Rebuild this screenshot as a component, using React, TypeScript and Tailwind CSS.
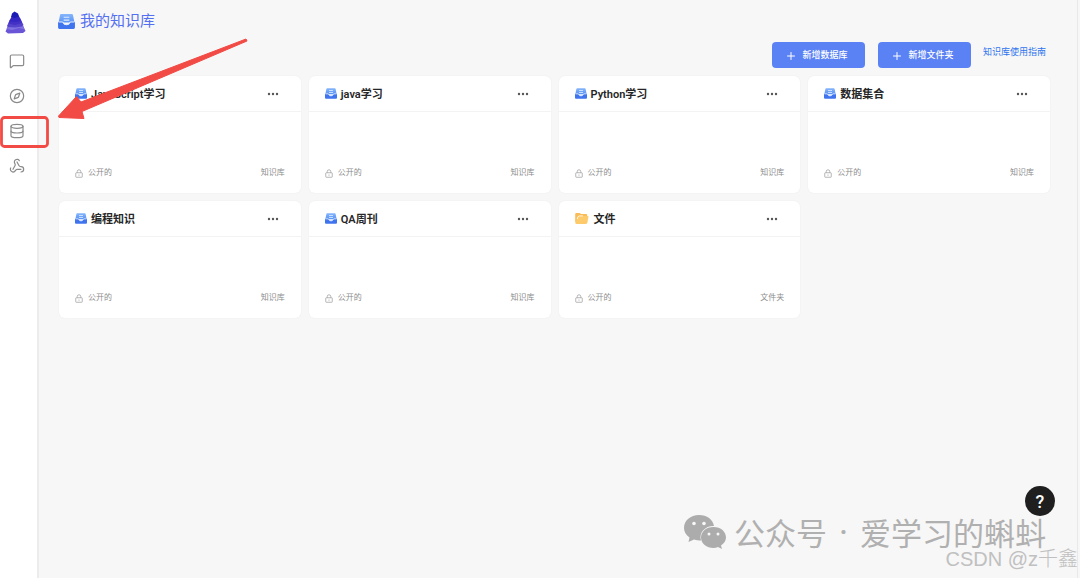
import { Compass, Database, MessageSquare, Plus, Webhook } from 'lucide-react';

type CardKind = 'dataset' | 'folder';

interface KnowledgeItem {
  name: string;
  kind: CardKind;
}

const items: KnowledgeItem[] = [
  { name: 'JavaScript学习', kind: 'dataset' },
  { name: 'java学习', kind: 'dataset' },
  { name: 'Python学习', kind: 'dataset' },
  { name: '数据集合', kind: 'dataset' },
  { name: '编程知识', kind: 'dataset' },
  { name: 'QA周刊', kind: 'dataset' },
  { name: '文件', kind: 'folder' },
];

const navItems = [
  { label: '对话', icon: MessageSquare },
  { label: '发现', icon: Compass },
  { label: '知识库', icon: Database },
  { label: '插件', icon: Webhook },
];

const Logo = () => (
  <svg viewBox="0 0 42 46" className="w-[21px] h-[23px]" aria-hidden="true">
    <path d="M6 30 L36 29 L41 40 L36 44 L6 45 L1 41 Z" fill="#6a55d6" />
    <path d="M5 31 L36 30 L39 37 L28 34 L14 38 L3 36 Z" fill="#8173e0" />
    <path d="M9 19 L32 18 L37 28 L34 31 L20 33 L6 32 L4 30 Z" fill="#5543cc" />
    <path d="M9 19 L32 18 L34 24 L20 28 L7 25 Z" fill="#4331c6" />
    <path d="M14 10 L27 9 L32 17 L30 20 L20 22 L10 21 L9 19 Z" fill="#3527c4" />
    <path d="M14 5 L19 1 L26 5 L28 11 L19 14 L12 12 Z" fill="#1b1bb5" />
  </svg>
);

const DatasetIcon = ({ className }: { className: string }) => (
  <svg viewBox="0 0 36 32" className={className} aria-hidden="true">
    <defs>
      <linearGradient id="tray" x1="0" y1="0" x2="0" y2="1">
        <stop offset="0" stopColor="#86b6fb" />
        <stop offset="1" stopColor="#5b93f5" />
      </linearGradient>
    </defs>
    <path d="M7 0 H29 Q32 0 32 3 L35 18 H1 L4 3 Q4 0 7 0 Z" fill="url(#tray)" />
    <path d="M12 7 H24 M12 13 H24" stroke="#dcebff" strokeWidth="2.5" />
    <path
      d="M0 17 H9 Q11 17 12 20 Q13 23 18 23 Q23 23 24 20 Q25 17 27 17 H36 V29 Q36 32 33 32 H3 Q0 32 0 29 Z"
      fill="#3f74ee"
    />
    <path
      d="M1 17 H9 Q11 17 12 20 Q13 23 18 23 Q23 23 24 20 Q25 17 27 17 H35"
      fill="none"
      stroke="#e4efff"
      strokeWidth="2.5"
    />
  </svg>
);

const FolderIcon = () => (
  <svg viewBox="0 0 42 34" className="w-[14px] h-[11px]" aria-hidden="true">
    <path d="M3 0 H14 L18 3 H34 Q37 3 37 7 V30 H3 Q0 30 0 27 V3 Q0 0 3 0 Z" fill="#f9bd58" />
    <path d="M12 9 H38 Q42 9 41 12 L37 31 Q36 34 33 34 H3 Q0 34 1 31 L7 12 Q8 9 12 9 Z" fill="#fdcb6b" />
    <path d="M6 19 Q7 9 13 9 H24" fill="none" stroke="#fff" strokeWidth="2.5" />
  </svg>
);

const LockIcon = () => (
  <svg viewBox="0 0 16 18" className="w-2 h-[9px]" fill="none" stroke="#a3a3a3" strokeWidth="1.6" aria-hidden="true">
    <rect x="1.500" y="7.500" width="13" height="9" rx="1" />
    <path d="M4.500 7.500 V5 Q4.500 1.500 8 1.500 Q11.500 1.500 11.500 5 V7.500 M8 11 V13.500" />
  </svg>
);

const MoreIcon = () => (
  <svg viewBox="0 0 12 4" className="w-3 h-1" aria-hidden="true">
    <circle cx="2" cy="2" r="1.2" fill="#555" />
    <circle cx="6" cy="2" r="1.2" fill="#555" />
    <circle cx="10" cy="2" r="1.2" fill="#555" />
  </svg>
);

const WechatIcon = () => (
  <svg viewBox="0 0 42 34" className="w-[42px] h-[34px]" aria-hidden="true">
    <path
      d="M15 0 C6.500 0 0 5.500 0 13 C0 17 2 20 5.500 22.500 L4.500 27 L10 24.500 Q14 25.800 17 25.500 C14.500 17 22 10.500 30 11 C29 4.500 23 0 15 0 Z"
      fill="#acacac"
    />
    <path
      d="M29.500 12 C22 12 17 16.800 17 22.500 C17 28.500 22.500 33 29.500 33 Q32 33 34 32 L38 34 L37 30.500 C40 28.500 42 25.800 42 22.500 C42 16.800 37 12 29.500 12 Z"
      fill="#acacac"
    />
    <circle cx="10" cy="8.500" r="1.800" fill="#f7f7f7" />
    <circle cx="20" cy="8.500" r="1.800" fill="#f7f7f7" />
    <circle cx="25" cy="19" r="1.500" fill="#f7f7f7" />
    <circle cx="34" cy="19" r="1.500" fill="#f7f7f7" />
  </svg>
);

const Sidebar = () => (
  <nav className="flex w-[39px] shrink-0 flex-col border-r-2 border-[#ececec] bg-white px-[5px] pt-[11px]">
    <a href="#home" aria-label="首页">
      <Logo />
    </a>
    <div className="mt-[19px] flex flex-col items-start gap-[19px] pl-1">
      {navItems.map(({ label, icon: Icon }) => (
        <a key={label} href={`#${label}`} aria-label={label} className="text-[#8a8a8a]">
          <Icon size={16} strokeWidth={1.8} />
        </a>
      ))}
    </div>
  </nav>
);

const KnowledgeCard = ({ name, kind }: KnowledgeItem) => (
  <article className="flex h-[117px] flex-col rounded-md bg-white shadow-[0_0_2px_rgba(0,0,0,0.06)]">
    <header className="flex h-9 items-center border-b border-[#f3f3f3] pl-4 pr-[22px]">
      {kind === 'folder' ? <FolderIcon /> : <DatasetIcon className="w-3 h-[11px]" />}
      <h2 className={`pt-[3px] text-[11px] font-semibold text-[#262626] ${kind === 'folder' ? 'ml-[5px]' : 'ml-1'}`}>
        {name}
      </h2>
      <button type="button" aria-label="更多" className="ml-auto">
        <MoreIcon />
      </button>
    </header>
    <footer className="mt-auto flex items-center justify-between px-4 pb-[14px] text-[8px] leading-3 text-[#8c8c8c]">
      <span className="flex items-center gap-[5px]">
        <LockIcon />
        公开的
      </span>
      <span>{kind === 'folder' ? '文件夹' : '知识库'}</span>
    </footer>
  </article>
);

const ActionButton = ({ label }: { label: string }) => (
  <button
    type="button"
    className="flex h-[26px] w-[93px] items-center justify-center gap-[5px] rounded bg-[#5b82f5] pr-1 pt-px text-[9px] font-medium text-white"
  >
    <Plus size={12} strokeWidth={2} />
    {label}
  </button>
);

// Red arrow and frame that point at the knowledge base entry
const Annotation = () => (
  <svg
    width="260"
    height="160"
    viewBox="0 0 260 160"
    className="pointer-events-none absolute left-0 top-0"
    aria-hidden="true"
  >
    <rect x="1.500" y="117.500" width="46" height="29" rx="3" fill="none" stroke="#f24a45" strokeWidth="2.800" />
    <path
      d="M58.500 116 L76.500 96.500 L81 102 L246 39 L247 41 L82 111.500 L84 118.500 L59 117.500 Z"
      fill="#f24a45"
      stroke="#f24a45"
      strokeLinejoin="round"
    />
  </svg>
);

const App = () => {
  return (
    <div className="relative flex min-h-screen bg-[#f7f7f7] font-['Roboto','Noto_Sans_CJK_SC',sans-serif]">
      <Sidebar />
      <main className="min-w-0 flex-1 pl-5 pr-[30px] pt-[9px]">
        <h1 className="flex items-center gap-[5px] text-[15px] leading-6 text-[#5470f0]">
          <DatasetIcon className="-ml-px w-[17px] h-[15px]" />
          我的知识库
        </h1>
        <div className="mt-[9px] flex items-start justify-end">
          <div className="flex gap-[13px]">
            <ActionButton label="新增数据库" />
            <ActionButton label="新增文件夹" />
          </div>
          <a href="#guide" className="ml-3 mr-1 pt-1 text-[9px] leading-3 text-[#2f74ee]">
            知识库使用指南
          </a>
        </div>
        <section className="mt-2 grid grid-cols-4 gap-2">
          {items.map((item) => (
            <KnowledgeCard key={item.name} {...item} />
          ))}
        </section>
      </main>

      <Annotation />

      <div className="pointer-events-none absolute bottom-[23px] right-[34px] flex items-center gap-2 font-['Noto_Sans_CJK_SC',sans-serif] text-[31px] leading-[46px] text-[#b0b0b0]">
        <WechatIcon />
        <span className="flex gap-3">
          <span>公众号</span>
          <span className="font-['Inter',sans-serif]">·</span>
          <span>爱学习的蝌蚪</span>
        </span>
      </div>
      <div className="pointer-events-none absolute bottom-[5px] right-[2px] font-['Liberation_Sans','Noto_Sans_CJK_SC',sans-serif] text-[20px] leading-7 font-light text-[#c0c0c0]">
        CSDN @z千鑫
      </div>
      <button
        type="button"
        aria-label="帮助"
        className="absolute bottom-[62px] right-[25px] flex size-[30px] items-center justify-center rounded-full bg-[#1f1f1f] text-[18px] font-medium text-white"
      >
        ?
      </button>
      <div className="pointer-events-none absolute inset-y-0 right-0 w-[3px] border-l border-[#e9e9e9]" />
    </div>
  );
};

export default App;
